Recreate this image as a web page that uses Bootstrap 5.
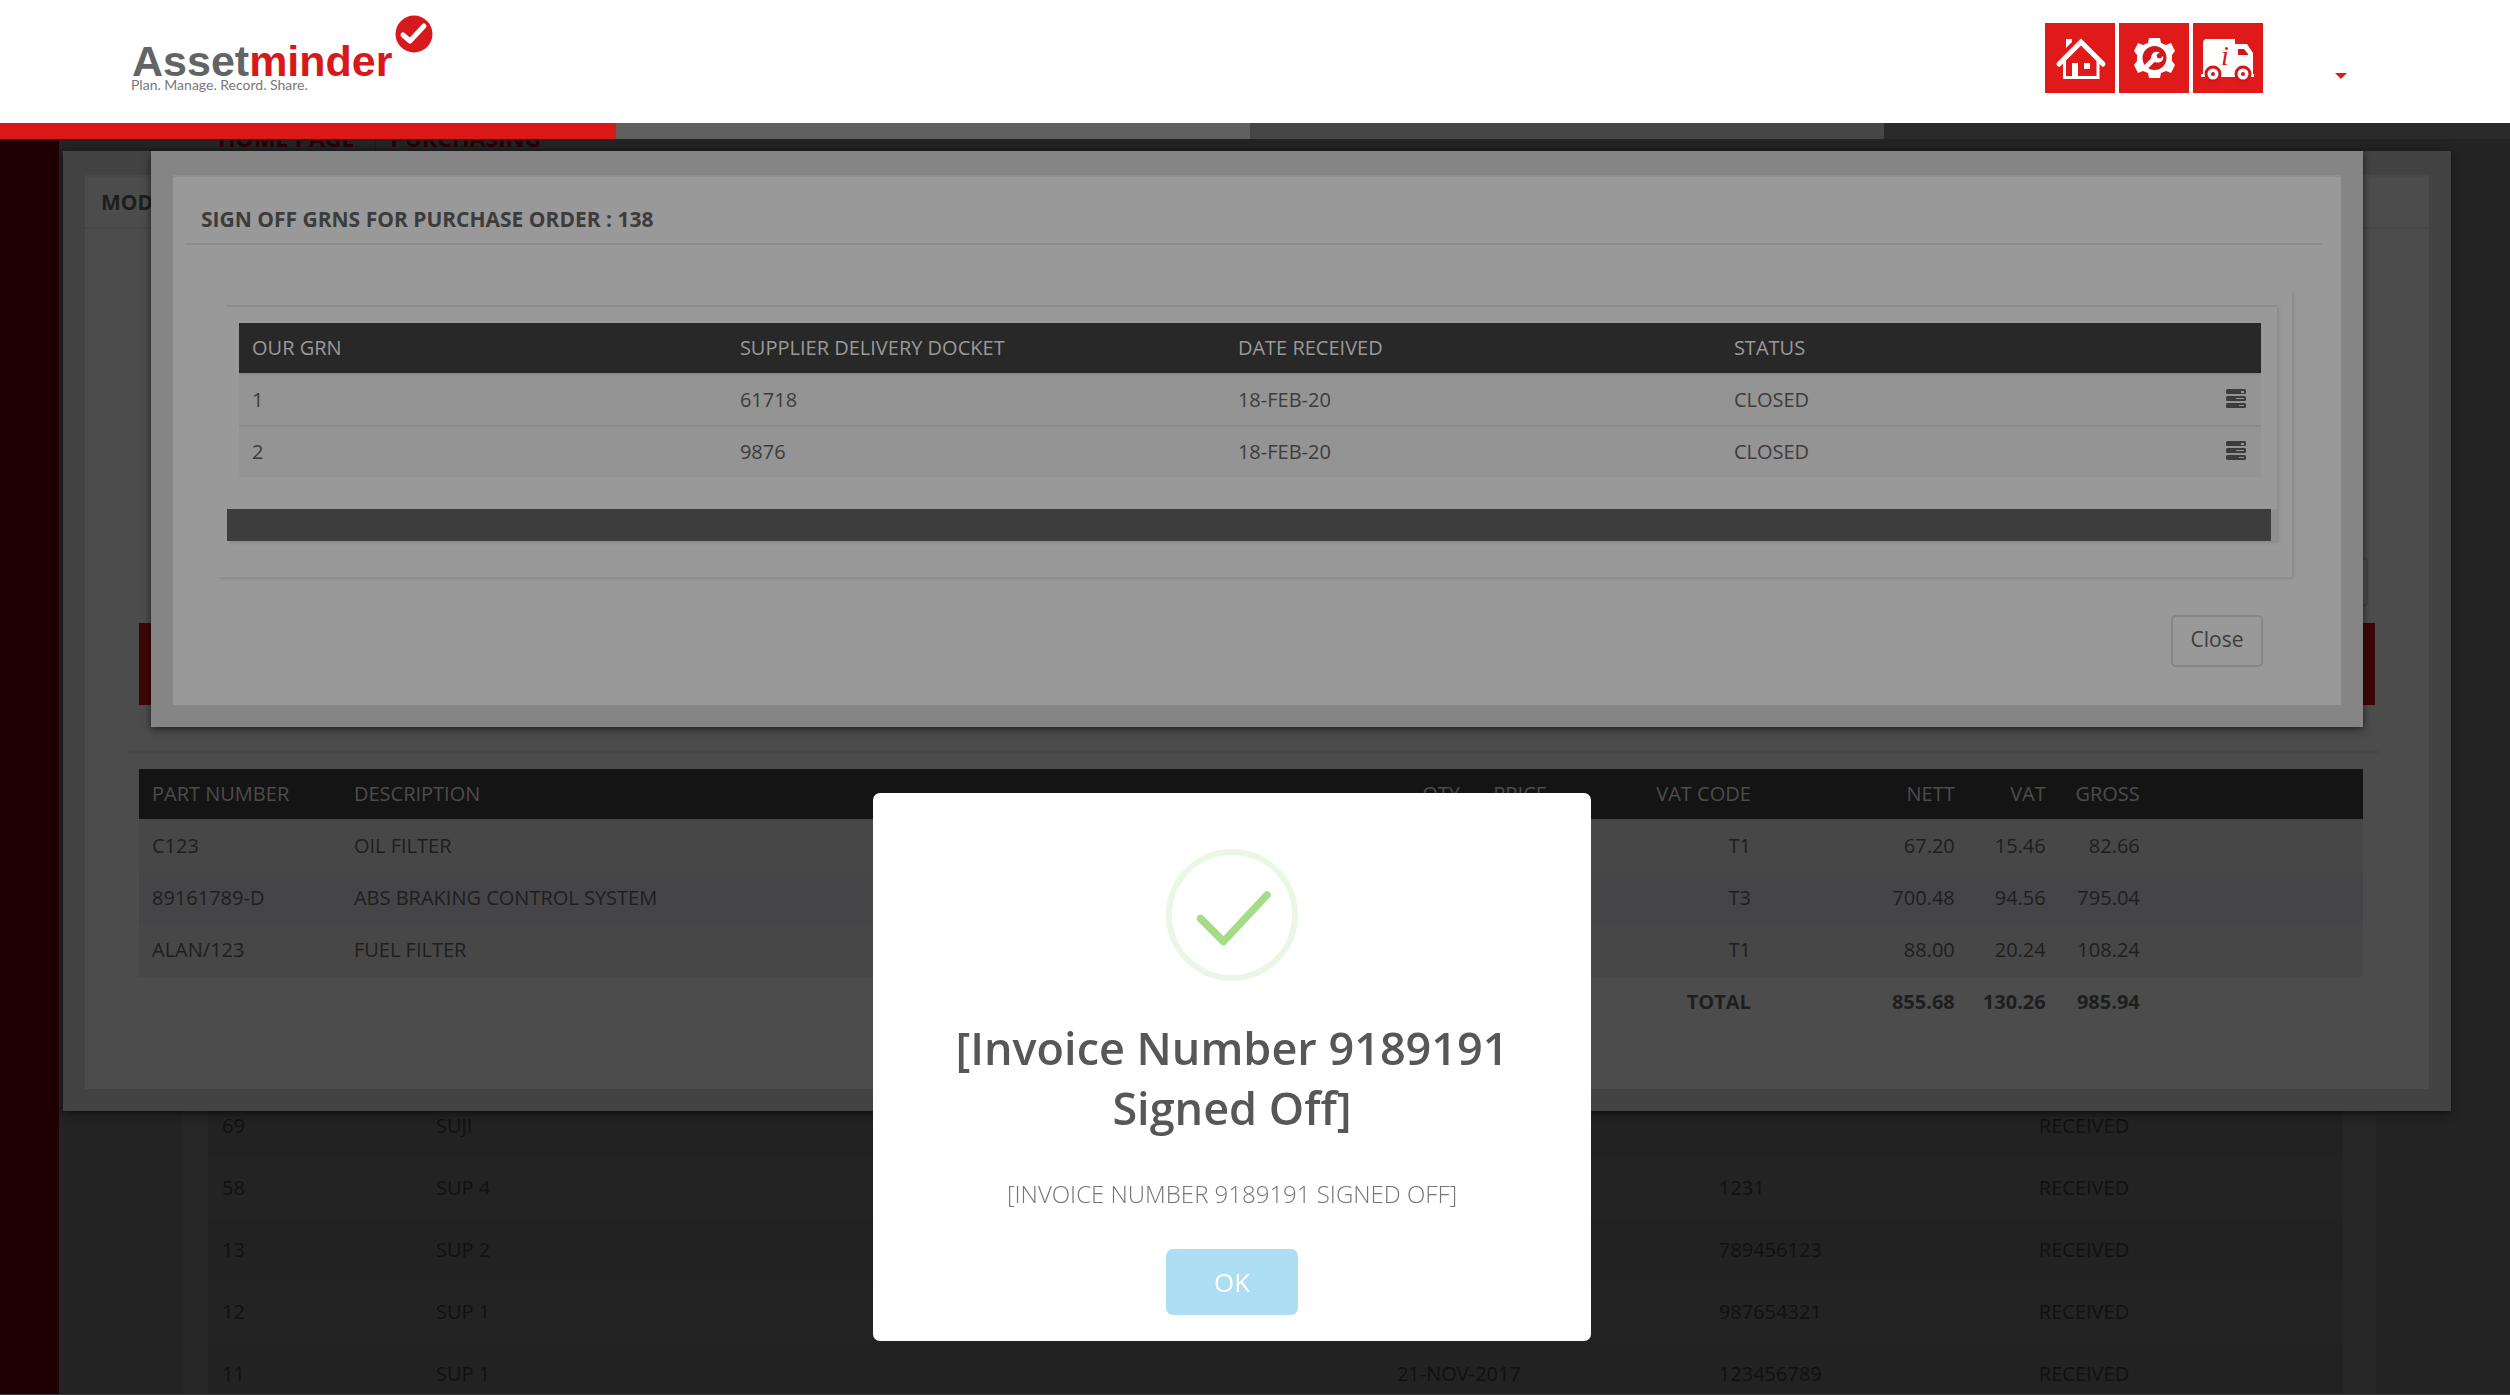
<!DOCTYPE html>
<html lang="en">
<head>
<meta charset="utf-8">
<meta name="viewport" content="width=device-width, initial-scale=1">
<title>Assetminder - Purchasing</title>
<link href="https://cdn.jsdelivr.net/npm/bootstrap@5.3.0/dist/css/bootstrap.min.css" rel="stylesheet">
<style>
  body { font-family: "Open Sans", "Noto Sans", sans-serif; font-size: 20px; line-height: 30px; background: #232323; color: #111; overflow: hidden; }
  .page { height: 100vh; overflow: hidden; border-bottom: 1px solid #3a3a3a; }
  .site-head { z-index: 1; }
  .topbar { height: 123px; background: #fff; padding: 15px 163px 0 131px; }
  .wordmark { font: bold 43px/40px "Liberation Sans", Arial, sans-serif; color: #636466; padding: 26px 2px 0 1px; }
  .wordmark b { color: #d7191c; }
  .tagline { font: 14px/14px Lato, sans-serif; color: #77787a; margin-top: -3px; }
  .brand-tick { width: 38px; height: 38px; }
  .tools { gap: 4px; padding-top: 8px; }
  .tool { width: 70px; height: 70px; background: #e0191b; }
  .account { margin-left: 68px; margin-top: 43px; color: #e0191b; border: 0; background: none; line-height: 12px; padding: 0; }
  .account.dropdown-toggle::after { margin: 0; border-width: 6px; border-bottom: 0; vertical-align: top; display: block; margin-top: 7px; }
  .strip { height: 16px; background: #2a2a2a; border-radius: 0; }
  .strip-a { width: 24.54%; background: #db1818; }
  .strip-b { width: 25.26%; background: #606060; }
  .strip-c { width: 25.26%; background: #464646; }
  .side { width: 59px; background: #200103; }
  .crumbs { height: 972px; margin-left: 159px; margin-top: -16px; font-weight: 700; font-size: 23px; color: #280305; align-items: flex-start; }
  .crumbs a { color: inherit; text-decoration: none; padding-right: 21px; }
  .crumbs a + a { border-left: 1px solid #1d1d1d; padding-left: 14px; }
  .orders-panel { margin: 0 134px 0 124px; padding: 0 33px 0 25px; background: #262626; }
  .table { --bs-table-bg: transparent; margin: 0; table-layout: fixed; color: inherit; }
  .table > :not(caption) > * > * { border: 0; color: inherit; font-weight: 400; box-shadow: none; white-space: nowrap; }
  .orders > tbody > tr > td { padding: 16px 14px; background: #222; color: #111; }
  .orders > tbody > tr:nth-child(even) > td { background: #232323; }

  .layer { position: fixed; top: 139px; left: 0; right: 0; padding-top: 12px; }
  .layer-order { padding-left: 63px; padding-right: 59px; }
  .layer-grn { padding-left: 151px; padding-right: 147px; }
  .frame { padding: 24px 22px 22px; box-shadow: 0 2px 8px rgba(0,0,0,.6); }
  .frame-order { background: #434343; color: #1e1e1e; }
  .frame-grn { background: #858585; color: #3c3c3c; }
  .sheet-order { background: #4c4c4c; border-top: 2px solid #494949; padding-bottom: 62px; }
  .sheet-grn { background: #999; border-top: 2px solid #8f8f8f; padding-bottom: 38px; }
  .sheet h2 { font-size: 21px; font-weight: 700; margin: 0; }
  .sheet-order h2 { line-height: 50px; padding-left: 16px; border-bottom: 2px solid #464646; }
  .sheet-grn h2 { line-height: 48px; padding: 18px 0 0 16px; margin: 0 18px 0 12px; border-bottom: 2px solid #8c8c8c; }
  .order-actions { padding: 328px 61px 16px 0; }
  .ghost-btn { width: 92px; height: 50px; border: 2px solid #424242; border-radius: 5px; background: none; }
  .alert-band { height: 82px; margin: 0 54px 46px; background: #3e0707; }
  .rule { height: 2px; margin: 0 49px 16px 42px; background: #474747; }
  .lines-wrap { padding: 0 66px 0 54px; }
  .grid > thead > tr > th { padding: 10px 13px; }
  .grid > tbody > tr > td, .grid > tfoot > tr > td { padding: 10px 13px; border-top: 2px solid; }
  .lines > thead > tr > th { background: #141414; color: #4c4c4c; }
  .lines > tbody > tr > td { background: #474747; border-color: #464646; }
  .lines > tbody > tr:nth-child(even) > td { background: #454548; }
  .lines > tfoot > tr > td { font-weight: 700; border-color: #474747; }
  .grn-box { margin: 44px 49px 0 44px; padding: 16px 15px 36px 10px; box-shadow: 2px 2px 3px rgba(0,0,0,.1); }
  .grn-card { border-top: 2px solid #8c8c8c; box-shadow: 2px 2px 3px rgba(0,0,0,.1); }
  .grn-scroll { padding: 16px 16px 32px 12px; }
  .grn-foot { background: #8f8f8f; padding-right: 6px; }
  .grn-foot div { height: 32px; background: #3d3d3d; }
  .grns > thead > tr > th { background: #282828; color: #999; }
  .grns > tbody > tr > td { background: #949494; border-color: #8a8a8a; }
  .grns > tbody > tr > td:last-child { padding-right: 15px; }
  .row-btn { border: 0; background: none; padding: 0; color: #3c3c3c; line-height: 28px; height: 30px; display: block; margin-left: auto; }
  .row-btn svg { display: block; margin-bottom: 3px; }
  .grn-actions { padding: 38px 78px 0 0; }
  .close-btn { width: 92px; height: 52px; border: 2px solid #858585; border-radius: 5px; color: #3c3c3c; font-size: 21px; line-height: 30px; padding: 7px 0 11px; }

  .layer-alert { position: fixed; inset: 0; padding: 0 46px 54px 0; }
  .sweet { width: 718px; background: #fff; border-radius: 7px; padding: 56px 26px 26px; text-align: center; }
  .sweet h1 { font-size: 45px; line-height: 60px; font-weight: 600; color: #575757; margin: 37px 0 35px; }
  .sweet p { font-size: 24px; line-height: 42px; font-weight: 300; color: #757575; margin: 0 0 34px; }
  .ok-btn { width: 132px; height: 66px; border: 0; border-radius: 7px; background: #aedef4; color: #fff; font-size: 26px; display: block; margin: 0 auto; padding: 0; }
  .ok-btn:hover { background: #a1d9f2; color: #fff; }
</style>
<script src="https://cdn.jsdelivr.net/npm/bootstrap@5.3.0/dist/js/bootstrap.bundle.min.js"></script>
</head>
<body>
<div class="page d-flex flex-column">
  <header class="site-head position-relative">
    <div class="topbar d-flex justify-content-between align-items-start">
      <a href="#" class="d-flex align-items-start text-decoration-none">
        <span class="d-flex flex-column">
          <span class="wordmark">Asset<b>minder</b></span>
          <span class="tagline">Plan. Manage. Record. Share.</span>
        </span>
        <svg class="brand-tick" viewBox="0 0 38 38" aria-hidden="true"><circle cx="19" cy="19" r="18.500" fill="#d7191c"/><path d="M8 20l7 6L29 11" fill="none" stroke="#fff" stroke-width="5" stroke-linecap="round" stroke-linejoin="round"/></svg>
      </a>
      <nav class="d-flex align-items-start tools">
        <a href="#" class="tool" aria-label="Home">
          <svg width="70" height="70" viewBox="0 0 70 70"><path d="M21 16h6v3l-6 6z" fill="#fff"/><path d="M14 41L36 19l22 22" fill="none" stroke="#fff" stroke-width="5" stroke-linecap="round"/><path d="M19.500 38v16.500h33.500V38" fill="none" stroke="#fff" stroke-width="3"/><path d="M27 40h6v14h-6zM39 40h6v6h-6z" fill="#fff"/></svg>
        </a>
        <a href="#" class="tool" aria-label="Settings">
          <svg width="70" height="70" viewBox="0 0 70 70"><path d="M30 15h11l1 5 5 2 5-2 4 8-3 4v6l3 4-4 8-5-2-5 2-1 5H30l-1-5-5-2-5 2-4-8 3-4v-6l-3-4 4-8 5 2 5-2z" fill="#fff"/><circle cx="35.500" cy="35" r="12" fill="#d0181a"/><path d="M28 43l6-6" stroke="#fff" stroke-width="5" stroke-linecap="round"/><path d="M41 29l-3.500 3 1 3 3 .5 2.500-2.500c1 4-2 7-6 6.500-4 0-7-3-5.500-7 1-3 4-5 8.500-3z" fill="#fff"/></svg>
        </a>
        <a href="#" class="tool" aria-label="Vehicle information">
          <svg width="70" height="70" viewBox="0 0 70 70"><path d="M10 20q0-4 4-4h28v5h12l6 9v21h1v3H8v-3h2z" fill="#fff"/><path d="M45 26h6l4 5v1H45z" fill="#d0181a"/><g fill="#fff" stroke="#d0181a" stroke-width="3"><circle cx="20" cy="51" r="7"/><circle cx="50" cy="51" r="7"/></g><circle cx="20" cy="51" r="2" fill="#d0181a"/><circle cx="50" cy="51" r="2" fill="#d0181a"/><text x="32" y="42" text-anchor="middle" font-family="Liberation Serif, serif" font-style="italic" font-size="28" fill="#d0181a">i</text></svg>
        </a>
        <button type="button" class="account dropdown-toggle" aria-label="Account menu"></button>
      </nav>
    </div>
    <div class="progress strip" aria-hidden="true">
      <div class="strip-a"></div><div class="strip-b"></div><div class="strip-c"></div>
    </div>
  </header>
  <div class="d-flex flex-grow-1">
    <aside class="side flex-shrink-0"></aside>
    <main class="flex-grow-1">
      <nav class="crumbs d-flex"><a href="#">HOME PAGE</a><a href="#">PURCHASING</a></nav>
      <section class="orders-panel">
        <table class="table orders">
          <colgroup><col style="width:10.02%"><col style="width:45.01%"><col style="width:15.08%"><col style="width:14.99%"><col></colgroup>
          <tbody>
            <tr><td>69</td><td>SUJI</td><td></td><td></td><td>RECEIVED</td></tr>
            <tr><td>58</td><td>SUP 4</td><td></td><td>1231</td><td>RECEIVED</td></tr>
            <tr><td>13</td><td>SUP 2</td><td></td><td>789456123</td><td>RECEIVED</td></tr>
            <tr><td>12</td><td>SUP 1</td><td></td><td>987654321</td><td>RECEIVED</td></tr>
            <tr><td>11</td><td>SUP 1</td><td>21-NOV-2017</td><td>123456789</td><td>RECEIVED</td></tr>
          </tbody>
        </table>
      </section>
    </main>
  </div>
</div>

<div class="layer layer-order">
  <div class="frame frame-order" role="dialog" aria-label="Order">
    <div class="sheet sheet-order">
      <h2>MOD</h2>
      <div class="order-actions d-flex justify-content-end"><button type="button" class="ghost-btn" aria-label="Back"></button></div>
      <div class="alert-band"></div>
      <div class="rule"></div>
      <div class="lines-wrap">
        <table class="table grid lines">
          <colgroup><col style="width:9.08%"><col style="width:47.66%"><col style="width:3.24%"><col style="width:3.91%"><col style="width:9.17%"><col style="width:9.17%"><col style="width:4.09%"><col style="width:4.23%"><col></colgroup>
          <thead><tr><th>PART NUMBER</th><th>DESCRIPTION</th><th class="text-end">QTY</th><th class="text-end">PRICE</th><th class="text-end">VAT CODE</th><th class="text-end">NETT</th><th class="text-end">VAT</th><th class="text-end">GROSS</th><th></th></tr></thead>
          <tbody>
            <tr><td>C123</td><td>OIL FILTER</td><td></td><td></td><td class="text-end">T1</td><td class="text-end">67.20</td><td class="text-end">15.46</td><td class="text-end">82.66</td><td></td></tr>
            <tr><td>89161789-D</td><td>ABS BRAKING CONTROL SYSTEM</td><td></td><td></td><td class="text-end">T3</td><td class="text-end">700.48</td><td class="text-end">94.56</td><td class="text-end">795.04</td><td></td></tr>
            <tr><td>ALAN/123</td><td>FUEL FILTER</td><td></td><td></td><td class="text-end">T1</td><td class="text-end">88.00</td><td class="text-end">20.24</td><td class="text-end">108.24</td><td></td></tr>
          </tbody>
          <tfoot><tr><td></td><td></td><td></td><td></td><td class="text-end">TOTAL</td><td class="text-end">855.68</td><td class="text-end">130.26</td><td class="text-end">985.94</td><td></td></tr></tfoot>
        </table>
      </div>
    </div>
  </div>
</div>

<div class="layer layer-grn">
  <div class="frame frame-grn" role="dialog" aria-label="Sign off GRNs">
    <div class="sheet sheet-grn">
      <h2>SIGN OFF GRNS FOR PURCHASE ORDER : 138</h2>
      <div class="grn-box">
        <div class="grn-card">
          <div class="grn-scroll">
            <table class="table grid grns">
              <colgroup><col style="width:24.13%"><col style="width:24.63%"><col style="width:24.53%"><col style="width:20.72%"><col></colgroup>
              <thead><tr><th>OUR GRN</th><th>SUPPLIER DELIVERY DOCKET</th><th>DATE RECEIVED</th><th>STATUS</th><th></th></tr></thead>
              <tbody>
                <tr><td>1</td><td>61718</td><td>18-FEB-20</td><td>CLOSED</td><td><button type="button" class="row-btn" aria-label="View lines"><svg width="20" height="19" viewBox="0 0 20 19"><g fill="currentColor"><rect width="20" height="5" rx="1.500"/><rect y="7" width="20" height="5" rx="1.500"/><rect y="14" width="20" height="5" rx="1.500"/></g><path d="M15 2h3v2h-3zM10 9h8v1h-8zM13 16h5v1h-5z" fill="#949494"/></svg></button></td></tr>
                <tr><td>2</td><td>9876</td><td>18-FEB-20</td><td>CLOSED</td><td><button type="button" class="row-btn" aria-label="View lines"><svg width="20" height="19" viewBox="0 0 20 19"><g fill="currentColor"><rect width="20" height="5" rx="1.500"/><rect y="7" width="20" height="5" rx="1.500"/><rect y="14" width="20" height="5" rx="1.500"/></g><path d="M15 2h3v2h-3zM10 9h8v1h-8zM13 16h5v1h-5z" fill="#949494"/></svg></button></td></tr>
              </tbody>
            </table>
          </div>
          <div class="grn-foot"><div></div></div>
        </div>
      </div>
      <div class="grn-actions d-flex justify-content-end"><button type="button" class="btn close-btn">Close</button></div>
    </div>
  </div>
</div>

<div class="layer-alert d-flex justify-content-center align-items-end">
  <div class="sweet" role="alertdialog" aria-labelledby="alert-title">
    <svg class="d-block mx-auto" width="132" height="132" viewBox="0 0 132 132" aria-hidden="true"><circle cx="66" cy="66" r="63" fill="none" stroke="#eaf7e5" stroke-width="6"/><path d="M34.500 69.500L57.500 92.500 101 46" fill="none" stroke="#a5dc86" stroke-width="7.500" stroke-linecap="round" stroke-linejoin="round"/></svg>
    <h1 id="alert-title">[Invoice Number 9189191 Signed Off]</h1>
    <p>[INVOICE NUMBER 9189191 SIGNED OFF]</p>
    <button type="button" class="btn ok-btn">OK</button>
  </div>
</div>
</body>
</html>
